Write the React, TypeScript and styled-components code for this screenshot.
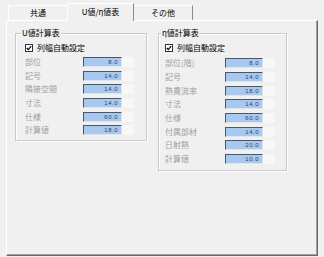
import React from 'react';
import styled, { createGlobalStyle } from 'styled-components';

const GlobalStyle = createGlobalStyle`
	html, body {
		margin: 0;
		padding: 0;
		background: #f0f0f0;
	}
	body {
		font-family: 'Noto Sans CJK JP', 'Noto Sans', sans-serif;
	}
`;

interface Row {
	label: string;
	value: string;
}

// values shown in the two lookup tables
const uRows: Row[] = [
	{ label: '部位', value: '8.0' },
	{ label: '記号', value: '14.0' },
	{ label: '隣接空間', value: '14.0' },
	{ label: '寸法', value: '14.0' },
	{ label: '仕様', value: '60.0' },
	{ label: '計算値', value: '18.0' }
];

const etaRows: Row[] = [
	{ label: '部位(階)', value: '8.0' },
	{ label: '記号', value: '14.0' },
	{ label: '熱貫流率', value: '18.0' },
	{ label: '寸法', value: '14.0' },
	{ label: '仕様', value: '60.0' },
	{ label: '付属部材', value: '14.0' },
	{ label: '日射熱', value: '20.0' },
	{ label: '計算値', value: '10.0' }
];

const Window = styled.div`
	width: 324px;
	height: 257px;
	box-sizing: border-box;
	padding: 3px 6px 1px 6px;
	display: flex;
	flex-direction: column;
	font-size: 8px;
	line-height: 10px;
`;

const TabStrip = styled.div`
	display: flex;
	align-items: flex-end;
	height: 17px;
	padding-left: 2px;
	position: relative;
	z-index: 1;
`;

const Tab = styled.div<{ $width: number; $active?: boolean }>`
	box-sizing: border-box;
	width: ${(p) => (p.$active ? p.$width + 2 : p.$width)}px;
	height: ${(p) => (p.$active ? 18 : 15)}px;
	margin: ${(p) => (p.$active ? '0 -1px -1px -1px' : '0')};
	position: relative;
	z-index: ${(p) => (p.$active ? 2 : 1)};
	background: #f0f0f0;
	border-top: 1px solid #ffffff;
	border-left: 1px solid #ffffff;
	border-right: 1px solid #8c8c8c;
	display: flex;
	align-items: center;
	justify-content: center;
	padding-bottom: ${(p) => (p.$active ? 2 : 0)}px;
	color: #000;
	white-space: nowrap;
`;

const Panel = styled.div`
	flex: 1;
	box-sizing: border-box;
	border: 1px solid;
	border-color: #ffffff #696969 #696969 #ffffff;
	box-shadow: inset -1px -1px 0 #a0a0a0;
	padding: 7px 0 0 8px;
	display: flex;
	align-items: flex-start;
	gap: 11px;
`;

const Group = styled.fieldset<{ $width: number }>`
	box-sizing: border-box;
	width: ${(p) => p.$width}px;
	margin: 0;
	padding: 0;
	border: 1px solid #c9c9c9;
	box-shadow: inset 1px 1px 0 #ffffff, 1px 1px 0 #ffffff;
`;

const Legend = styled.legend<{ $offset: number }>`
	margin-left: ${(p) => p.$offset}px;
	padding: 0 1px;
	background: #f0f0f0;
	color: #000;
	font-size: 8px;
	line-height: 10px;
`;

const GroupBody = styled.div<{ $padLeft: number; $padBottom: number }>`
	padding: 5px 0 ${(p) => p.$padBottom}px ${(p) => p.$padLeft}px;
	display: flex;
	flex-direction: column;
`;

const CheckRow = styled.label<{ $height: number }>`
	display: flex;
	align-items: flex-start;
	gap: 4px;
	height: ${(p) => p.$height}px;
	color: #000;
`;

const CheckBox = styled.span`
	box-sizing: border-box;
	width: 8px;
	height: 8px;
	margin-top: 1px;
	background: #ffffff;
	border: 1px solid #333333;
	display: flex;
	align-items: center;
	justify-content: center;
`;

const FieldRow = styled.div`
	display: flex;
	align-items: center;
	height: 13.7px;
`;

const FieldLabel = styled.span<{ $width: number }>`
	width: ${(p) => p.$width}px;
	color: #a0a0a0;
	white-space: nowrap;
`;

const ValueBox = styled.div<{ $width: number }>`
	box-sizing: border-box;
	width: ${(p) => p.$width}px;
	height: 10px;
	background: #a5c9f1;
	border-top: 1px solid #555555;
	border-left: 1px solid #555555;
	border-right: 1px solid #d8e6f5;
	border-bottom: 1px solid #d8e6f5;
	padding-right: 3px;
	text-align: right;
	font-family: 'Liberation Sans', sans-serif;
	font-size: 6px;
	line-height: 8px;
	letter-spacing: 0.5px;
	color: #3c3c5a;
`;

const Spare = styled.div`
	width: 12px;
	height: 10px;
	background: #f7f7f7;
`;

const Check = () => (
	<svg width="6" height="6" viewBox="0 0 6 6">
		<path d="M0.8 3 L2.3 4.6 L5.2 1.2" fill="none" stroke="#000" strokeWidth="1.2" />
	</svg>
);

interface TableProps {
	title: string;
	rows: Row[];
	width: number;
	legendOffset: number;
	padLeft: number;
	padBottom: number;
	labelWidth: number;
	boxWidth: number;
	checkHeight: number;
}

const CalcTable: React.FC<TableProps> = (props) => (
	<Group $width={props.width}>
		<Legend $offset={props.legendOffset}>{props.title}</Legend>
		<GroupBody $padLeft={props.padLeft} $padBottom={props.padBottom}>
			<CheckRow $height={props.checkHeight}>
				<CheckBox>
					<Check />
				</CheckBox>
				<span>列幅自動設定</span>
			</CheckRow>
			{props.rows.map((row) => (
				<FieldRow key={row.label}>
					<FieldLabel $width={props.labelWidth}>{row.label}</FieldLabel>
					<ValueBox $width={props.boxWidth}>{row.value}</ValueBox>
					<Spare />
				</FieldRow>
			))}
		</GroupBody>
	</Group>
);

export default function App() {
	return (
		<>
			<GlobalStyle />
			<Window>
				<TabStrip>
					<Tab $width={60}>共通</Tab>
					<Tab $width={65} $active>
						U値/η値表
					</Tab>
					<Tab $width={60}>その他</Tab>
				</TabStrip>
				<Panel>
					<CalcTable
						title="U値計算表"
						rows={uRows}
						width={132}
						legendOffset={5}
						padLeft={9}
						padBottom={3}
						labelWidth={58}
						boxWidth={39}
						checkHeight={12}
					/>
					<CalcTable
						title="η値計算表"
						rows={etaRows}
						width={129}
						legendOffset={2}
						padLeft={6}
						padBottom={4}
						labelWidth={60}
						boxWidth={38}
						checkHeight={13.3}
					/>
				</Panel>
			</Window>
		</>
	);
}
